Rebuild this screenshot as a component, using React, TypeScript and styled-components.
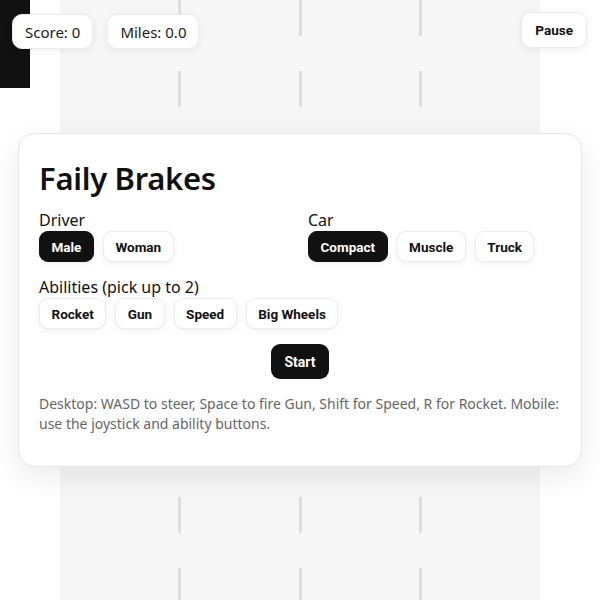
import React, { useState } from "react";
import styled, { createGlobalStyle } from "styled-components";

const GlobalStyle = createGlobalStyle`
  html, body {
    margin: 0;
    padding: 0;
    background: #ffffff;
  }
  * {
    box-sizing: border-box;
  }
`;

const Stage = styled.div`
  position: relative;
  width: 600px;
  height: 600px;
  overflow: hidden;
  background: #ffffff;
  display: flex;
  justify-content: center;
  font-family: "Noto Sans", "Open Sans", sans-serif;
`;

// road with three dashed lane markers
const Road = styled.div`
  width: 480px;
  height: 100%;
  background: #f6f6f6;
  display: flex;
  justify-content: space-evenly;
`;

const LaneLine = styled.div`
  width: 3px;
  height: 100%;
  background: repeating-linear-gradient(
    to bottom,
    #dedede 0px,
    #dedede 36px,
    transparent 36px,
    transparent 71px
  );
`;

const Obstacle = styled.div`
  position: absolute;
  left: 0;
  top: 0;
  width: 30px;
  height: 88px;
  background: #111111;
`;

const Hud = styled.div`
  position: absolute;
  top: 12px;
  left: 12px;
  right: 13px;
  display: flex;
  align-items: flex-start;
  gap: 14px;
`;

const Stat = styled.div`
  margin-top: 2px;
  height: 35px;
  padding: 0 12px;
  display: flex;
  align-items: center;
  background: #ffffff;
  border: 1px solid #ececec;
  border-radius: 10px;
  box-shadow: 0 2px 8px rgba(0, 0, 0, 0.06);
  font-size: 15px;
  color: #1a1a1a;
`;

const PauseButton = styled.button`
  margin-left: auto;
  height: 36px;
  padding: 0 13px;
  background: #ffffff;
  border: 1px solid #ececec;
  border-radius: 10px;
  box-shadow: 0 2px 8px rgba(0, 0, 0, 0.07);
  font-family: Roboto, "Liberation Sans", sans-serif;
  font-weight: 700;
  font-size: 13.5px;
  color: #111111;
  cursor: pointer;
`;

const Overlay = styled.div`
  position: absolute;
  inset: 0;
  display: flex;
  align-items: center;
  justify-content: center;
`;

const Card = styled.div`
  width: 564px;
  background: #ffffff;
  border: 1px solid #e6e6e6;
  border-radius: 16px;
  box-shadow: 0 10px 30px rgba(0, 0, 0, 0.08);
  padding: 20px 20px 32px;
`;

const Title = styled.h1`
  margin: 5px 0 13px;
  font-size: 31px;
  font-weight: 600;
  letter-spacing: -0.3px;
  line-height: 38px;
  color: #111111;
`;

const Columns = styled.div`
  display: grid;
  grid-template-columns: 1fr 1fr;
  gap: 16px;
`;

const Group = styled.div`
  display: flex;
  flex-direction: column;
  margin-bottom: 15px;
`;

const Label = styled.div`
  font-size: 16px;
  line-height: 20px;
  color: #111111;
`;

const Options = styled.div`
  display: flex;
  gap: 9px;
  margin-top: 1px;
`;

const Choice = styled.button<{ $active?: boolean }>`
  height: 31px;
  padding: 0 11.5px;
  border-radius: 9px;
  border: 1px solid ${(p) => (p.$active ? "#111111" : "#ececec")};
  background: ${(p) => (p.$active ? "#111111" : "#ffffff")};
  color: ${(p) => (p.$active ? "#ffffff" : "#111111")};
  box-shadow: 0 2px 6px rgba(0, 0, 0, 0.06);
  font-family: Roboto, "Liberation Sans", sans-serif;
  font-weight: 700;
  font-size: 13.5px;
  cursor: pointer;
`;

const StartRow = styled.div`
  display: flex;
  justify-content: center;
  margin-top: 1px;
`;

const StartButton = styled.button`
  height: 35px;
  padding: 0 13px;
  border-radius: 9px;
  border: none;
  background: #111111;
  color: #ffffff;
  font-family: Roboto, "Liberation Sans", sans-serif;
  font-weight: 700;
  font-size: 14px;
  cursor: pointer;
`;

const Help = styled.p`
  margin: 15px 0 0;
  font-size: 14px;
  line-height: 20px;
  color: #666666;
`;

const drivers = ["Male", "Woman"];
const cars = ["Compact", "Muscle", "Truck"];
const abilities = ["Rocket", "Gun", "Speed", "Big Wheels"];

export default function App() {
  const [driver, setDriver] = useState("Male");
  const [car, setCar] = useState("Compact");
  const [picked, setPicked] = useState<string[]>([]);

  const toggleAbility = (name: string) => {
    setPicked((prev) =>
      prev.includes(name)
        ? prev.filter((a) => a !== name)
        : prev.length < 2
        ? [...prev, name]
        : prev
    );
  };

  return (
    <>
      <GlobalStyle />
      <Stage>
        <Road>
          <LaneLine />
          <LaneLine />
          <LaneLine />
        </Road>
        <Obstacle />

        <Hud>
          <Stat>Score: 0</Stat>
          <Stat>Miles: 0.0</Stat>
          <PauseButton>Pause</PauseButton>
        </Hud>

        <Overlay>
          <Card>
            <Title>Faily Brakes</Title>
            <Columns>
              <Group>
                <Label>Driver</Label>
                <Options>
                  {drivers.map((d) => (
                    <Choice key={d} $active={driver === d} onClick={() => setDriver(d)}>
                      {d}
                    </Choice>
                  ))}
                </Options>
              </Group>
              <Group>
                <Label>Car</Label>
                <Options>
                  {cars.map((c) => (
                    <Choice key={c} $active={car === c} onClick={() => setCar(c)}>
                      {c}
                    </Choice>
                  ))}
                </Options>
              </Group>
            </Columns>
            <Group>
              <Label>Abilities (pick up to 2)</Label>
              <Options>
                {abilities.map((a) => (
                  <Choice key={a} $active={picked.includes(a)} onClick={() => toggleAbility(a)}>
                    {a}
                  </Choice>
                ))}
              </Options>
            </Group>
            <StartRow>
              <StartButton>Start</StartButton>
            </StartRow>
            <Help>
              Desktop: WASD to steer, Space to fire Gun, Shift for Speed, R for Rocket. Mobile:
              use the joystick and ability buttons.
            </Help>
          </Card>
        </Overlay>
      </Stage>
    </>
  );
}
